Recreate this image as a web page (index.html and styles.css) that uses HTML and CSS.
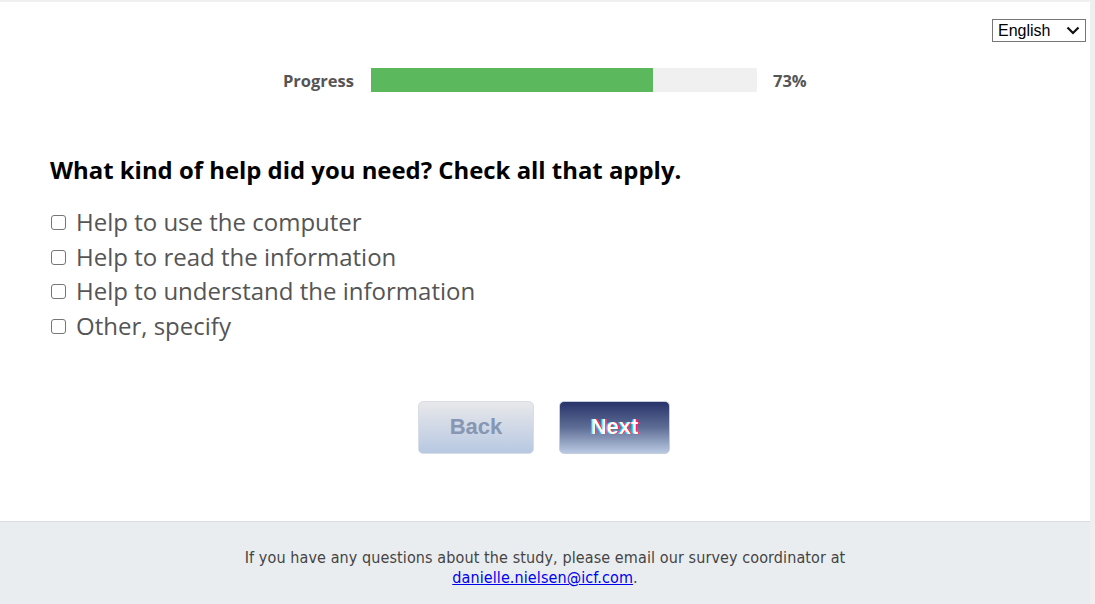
FILE: index.html
```html
<!DOCTYPE html>
<html>
<head>
<meta charset="utf-8">
<link rel="stylesheet" href="styles.css">
</head>
<body>
<div class="page">
  <main class="main">
    <div class="lang-row">
      <div class="lang-wrap">
        <select class="lang"><option>English</option></select>
        <svg class="chev" width="14" height="9" viewBox="0 0 14 9"><path d="M1.5 1.5 L7 7 L12.5 1.5" fill="none" stroke="#111" stroke-width="2.2"/></svg>
      </div>
    </div>
    <div class="progress">
      <span class="progress-label">Progress</span>
      <div class="bar"><div class="fill" style="width:73%"></div></div>
      <span class="progress-value">73%</span>
    </div>
    <h1 class="question">What kind of help did you need? Check all that apply.</h1>
    <ul class="options">
      <li class="option"><span class="box"></span><span>Help to use the computer</span></li>
      <li class="option"><span class="box"></span><span>Help to read the information</span></li>
      <li class="option"><span class="box"></span><span>Help to understand the information</span></li>
      <li class="option"><span class="box"></span><span>Other, specify</span></li>
    </ul>
    <div class="nav">
      <button class="btn back">Back</button>
      <button class="btn next">Next</button>
    </div>
  </main>
  <footer class="footer">
    <p>If you have any questions about the study, please email our survey coordinator at<br><a href="#">danielle.nielsen@icf.com</a>.</p>
  </footer>
</div>
</body>
</html>
```
FILE: styles.css
```css
html, body {
  margin: 0;
  padding: 0;
  background: #efefef;
  height: 100%;
  overflow: hidden;
}
.page {
  width: 1090px;
  margin-top: 2px;
  height: 602px;
  background: #fff;
  display: flex;
  flex-direction: column;
  font-family: "Open Sans", sans-serif;
}
.main {
  flex: 1;
  padding: 17px 4px 0 50px;
}
.lang-row {
  display: flex;
  justify-content: flex-end;
}
.lang-wrap {
  position: relative;
  width: 94px;
  height: 23px;
}
.lang {
  appearance: none;
  -webkit-appearance: none;
  font-family: "Liberation Sans", Arial, sans-serif;
  font-size: 16px;
  height: 23px;
  width: 94px;
  border: 1px solid #767676;
  border-radius: 0;
  background: #fff;
  color: #000;
  padding: 0 0 0 5px;
  margin: 0;
}
.chev {
  position: absolute;
  right: 6px;
  top: 7px;
  pointer-events: none;
}
.progress {
  display: flex;
  align-items: center;
  margin: 26px 0 0 0;
  height: 24px;
}
.progress-label {
  font-weight: 700;
  font-size: 16.5px;
  color: #555;
  width: 304px;
  text-align: right;
  margin-right: 17px;
}
.bar {
  width: 386px;
  height: 24px;
  background: #f0f0f0;
}
.fill {
  height: 100%;
  background: #5cb85c;
}
.progress-value {
  font-weight: 700;
  font-size: 16.5px;
  color: #555;
  margin-left: 16px;
}
.question {
  margin: 62px 0 0;
  font-size: 23.9px;
  font-weight: 700;
  color: #000;
  line-height: 32px;
}
.options {
  list-style: none;
  margin: 18px 0 0;
  padding: 0;
}
.option {
  display: flex;
  align-items: center;
  font-size: 24px;
  color: #555;
  height: 34.7px;
}
.box {
  width: 13px;
  height: 13px;
  border: 1.5px solid #767676;
  border-radius: 3px;
  margin: 2px 10px 0 1px;
}
.nav {
  display: flex;
  justify-content: center;
  gap: 25px;
  margin: 58px 0 0 -48px;
}
.btn {
  height: 53px;
  border-radius: 5px;
  font-family: "Liberation Sans", Arial, sans-serif;
  font-weight: 700;
  font-size: 22px;
  padding: 0;
}
.back {
  width: 116px;
  border: 1px solid #d8dde6;
  background: linear-gradient(#e8e8ea, #b7c8e2);
  color: #8696b3;
}
.next {
  width: 111px;
  border: 1px solid #c5cdda;
  background: linear-gradient(#28336a, #5e6d95 50%, #b9c9e2);
  color: #fff;
  text-shadow: 1px 0 0 #f03, -1px 0 0 #0cf;
}
.footer {
  height: 82px;
  background: #eaedf0;
  border-top: 1px solid #d9dde2;
  display: flex;
  justify-content: center;
}
.footer p {
  margin: 26px 0 0;
  text-align: center;
  font-family: "DejaVu Sans Condensed", "Liberation Sans", sans-serif;
  font-size: 16px;
  letter-spacing: 0.1px;
  line-height: 20px;
  color: #444;
}
.footer a {
  color: #00e;
}
```
